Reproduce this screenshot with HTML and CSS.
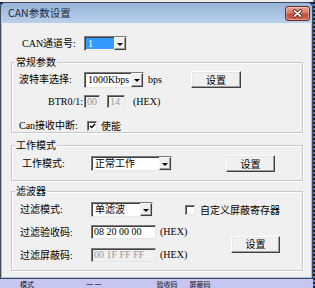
FILE: index.html
```html
<!DOCTYPE html>
<html>
<head>
<meta charset="utf-8">
<link rel="stylesheet" href="styles.css">
</head>
<body>
<div class="screen">
  <div class="bg-top"></div>
  <div class="window">
    <div class="titlebar">
      <span class="title">CAN参数设置</span>
      <div class="close">
        <svg width="11" height="9" viewBox="0 0 11 9"><path d="M2.5 1.8 L8.5 7.2 M8.5 1.8 L2.5 7.2" stroke="#5a1c16" stroke-width="3.4" stroke-linecap="round"/><path d="M2.5 1.8 L8.5 7.2 M8.5 1.8 L2.5 7.2" stroke="#ffffff" stroke-width="1.8" stroke-linecap="round"/></svg>
      </div>
    </div>
    <div class="client">
      <div class="row row-channel">
        <span class="lbl lbl-channel">CAN通道号:</span>
        <div class="combo combo-channel"><span class="combo-text"><span class="sel">1</span></span><span class="drop"></span></div>
      </div>

      <div class="group group-general">
        <div class="legend">常规参数</div>
        <div class="row row-baud">
          <span class="lbl lbl-baud">波特率选择:</span>
          <div class="combo combo-baud"><span class="combo-text">1000Kbps</span><span class="drop"></span></div>
          <span class="unit">bps</span>
          <div class="btn btn-baud">设置</div>
        </div>
        <div class="row row-btr">
          <span class="lbl lbl-btr">BTR0/1:</span>
          <div class="input disabled input-btr0">00</div>
          <div class="input disabled input-btr1">14</div>
          <span class="hex hex-btr">(HEX)</span>
        </div>
        <div class="row row-intr">
          <span class="lbl lbl-intr">Can接收中断:</span>
          <div class="check checked"><svg width="8" height="8" viewBox="0 0 8 8"><path d="M1.2 3.6 L3.1 5.6 L6.9 1.6" fill="none" stroke="#000" stroke-width="1.6"/></svg></div>
          <span class="check-label">使能</span>
        </div>
      </div>

      <div class="group group-mode">
        <div class="legend">工作模式</div>
        <div class="row row-mode">
          <span class="lbl lbl-mode">工作模式:</span>
          <div class="combo combo-mode"><span class="combo-text">正常工作</span><span class="drop"></span></div>
          <div class="btn btn-mode">设置</div>
        </div>
      </div>

      <div class="group group-filter">
        <div class="legend">滤波器</div>
        <div class="row row-fmode">
          <span class="lbl lbl-filter">过滤模式:</span>
          <div class="combo combo-filter"><span class="combo-text">单滤波</span><span class="drop"></span></div>
          <div class="check check-custom"></div>
          <span class="check-label">自定义屏蔽寄存器</span>
        </div>
        <div class="filter-block">
          <div class="filter-cols">
            <div class="row row-code">
              <span class="lbl lbl-filter">过滤验收码:</span>
              <div class="input input-code">08 20 00 00</div>
              <span class="hex">(HEX)</span>
            </div>
            <div class="row row-mask">
              <span class="lbl lbl-filter">过滤屏蔽码:</span>
              <div class="input disabled input-code">00 1F FF FF</div>
              <span class="hex">(HEX)</span>
            </div>
          </div>
          <div class="btn btn-filter">设置</div>
        </div>
      </div>
    </div>
  </div>
  <div class="bg-bottom">
    <span class="frag frag-1">模式</span>
    <span class="frag frag-2">一 一</span>
    <span class="frag frag-3">验收码</span>
    <span class="frag frag-4">屏蔽码</span>
  </div>
</div>
</body>
</html>
```

FILE: styles.css
```css
* { box-sizing: border-box; }
html, body { margin: 0; padding: 0; }
body {
  width: 315px;
  height: 288px;
  overflow: hidden;
  font-family: "Liberation Serif", "Noto Sans CJK SC", serif;
  font-size: 10px;
  color: #000;
}
.screen {
  width: 315px;
  height: 288px;
  overflow: hidden;
  display: flex;
  flex-direction: column;
  background: repeating-linear-gradient(to bottom, #4f7fc4 0 2px, #14233c 2px 4px);
}
.bg-top {
  height: 2px;
  width: 313px;
  background: #eceef0;
}
.window {
  width: 313px;
  height: 277px;
  border: 1px solid #3e4b5e;
  border-radius: 5px 5px 0 0;
  background: linear-gradient(#98b4d9, #b9d0eb 20px, #a9bdd6 21px, #a9bdd6);
  padding: 0 1px 1px 1px;
  display: flex;
  flex-direction: column;
}
.titlebar {
  height: 20px;
  display: flex;
  align-items: center;
  padding: 0 1px 0 6px;
}
.title {
  flex: 1;
  font-family: "Noto Sans CJK SC", "Noto Sans", sans-serif;
  font-size: 10.5px;
  color: #1c2c44;
  line-height: 12px;
}
.close {
  width: 25px;
  height: 15px;
  border: 1px solid #6e2a22;
  border-radius: 3px;
  background: linear-gradient(#e7a597, #d6786a 45%, #c24a3d 55%, #cf6757);
  display: flex;
  align-items: center;
  justify-content: center;
  box-shadow: inset 0 0 0 1px rgba(255,255,255,0.35);
}
.close svg { display: block; }
.client {
  height: 254px;
  background: #f0f0f0;
  display: flex;
  flex-direction: column;
}
.row {
  display: flex;
  align-items: center;
}
.lbl {
  flex: none;
  line-height: 13px;
  white-space: nowrap;
}

/* channel row */
.row-channel { margin-top: 13px; padding-left: 20px; height: 15px; }
.lbl-channel { width: 62px; }

/* combo */
.combo {
  flex: none;
  display: flex;
  background: #fff;
  border: 1px solid;
  border-color: #7a7a7a #e6e6e6 #e6e6e6 #7a7a7a;
  box-shadow: inset 1px 1px 0 #404040;
}
.combo-text {
  flex: 1;
  display: flex;
  align-items: center;
  padding-left: 3px;
  line-height: 12px;
  white-space: nowrap;
  overflow: hidden;
}
.combo-channel { width: 43px; height: 15px; }
.combo-channel .combo-text { padding: 1px 0 1px 1px; }
.sel {
  display: block;
  width: 28px;
  height: 11px;
  background: #3399ff;
  color: #fff;
  line-height: 11px;
  padding-left: 2px;
}
.drop {
  flex: none;
  width: 12px;
  background: #f0f0f0;
  border: 1px solid;
  border-color: #f8f8f8 #404040 #404040 #f8f8f8;
  box-shadow: inset -1px -1px 0 #a0a0a0;
  display: flex;
  align-items: center;
  justify-content: center;
}
.drop::after {
  content: "";
  border-left: 3px solid transparent;
  border-right: 3px solid transparent;
  border-top: 3px solid #000;
  margin-top: 1px;
}

/* group boxes */
.group {
  flex: none;
  margin-left: 9px;
  width: 292px;
  border: 1px solid #c8c8c8;
  box-shadow: 1px 1px 0 #fff, inset 1px 1px 0 #fff;
  display: flex;
  flex-direction: column;
}
.legend {
  width: max-content;
  height: 14px;
  line-height: 14px;
  margin: -8px 0 0 3px;
  padding: 0 1px;
  background: #f0f0f0;
  font-family: "Noto Sans CJK SC", sans-serif;
}
.group-general { margin-top: 11px; height: 71px; }
.group-mode { margin-top: 12px; height: 36px; }
.group-filter { margin-top: 10px; height: 80px; }

/* buttons */
.btn {
  flex: none;
  height: 17px;
  background: #f0f0f0;
  border: 1px solid;
  border-color: #ffffff #404040 #404040 #ffffff;
  box-shadow: inset -1px -1px 0 #a0a0a0, inset 1px 1px 0 #e6e6e6;
  display: flex;
  align-items: center;
  justify-content: center;
  font-family: "Noto Sans CJK SC", sans-serif;
  line-height: 12px;
}

/* general group */
.row-baud { margin-top: 2px; padding-left: 7px; height: 17px; }
.lbl-baud { width: 65px; }
.combo-baud { width: 60px; height: 16px; }
.unit { flex: none; width: 43px; margin-left: 4px; line-height: 12px; }
.btn-baud { width: 50px; }

.row-btr { margin-top: 7px; padding-left: 7px; height: 13px; }
.lbl-btr { width: 65px; text-align: right; padding-right: 1px; }
.input {
  flex: none;
  height: 13px;
  background: #fff;
  border: 1px solid;
  border-color: #7a7a7a #e6e6e6 #e6e6e6 #7a7a7a;
  box-shadow: inset 1px 1px 0 #404040;
  padding-left: 2px;
  line-height: 11px;
  white-space: nowrap;
}
.input.disabled { background: #f0f0f0; color: #9a9a9a; }
.input-btr0 { width: 16px; }
.input-btr1 { width: 18px; margin-left: 7px; }
.hex { flex: none; margin-left: 4px; line-height: 12px; white-space: nowrap; }
.hex-btr { margin-left: 8px; }

.row-intr { margin-top: 11px; padding-left: 7px; height: 13px; }
.lbl-intr { width: 68px; }
.check {
  flex: none;
  width: 10px;
  height: 10px;
  background: #fff;
  border: 1px solid;
  border-color: #7a7a7a #e6e6e6 #e6e6e6 #7a7a7a;
  box-shadow: inset 1px 1px 0 #404040;
  display: flex;
  align-items: center;
  justify-content: center;
}
.check svg { display: block; margin: 1px 0 0 1px; }
.check-label { flex: none; margin-left: 4px; line-height: 13px; white-space: nowrap; font-family: "Noto Sans CJK SC", sans-serif; }

/* mode group */
.row-mode { margin-top: 3px; padding-left: 10px; height: 17px; }
.lbl-mode { width: 69px; }
.combo-mode { width: 81px; height: 15px; }
.btn-mode { width: 49px; margin-left: 54px; }

/* filter group */
.row-fmode { margin-top: 4px; padding-left: 8px; height: 15px; }
.lbl-filter { width: 71px; }
.combo-filter { width: 62px; height: 15px; }
.check-custom { margin-left: 32px; }
.row-fmode .check-label { margin-left: 5px; }
.filter-block {
  display: flex;
  align-items: center;
  margin-top: 8px;
  padding-left: 8px;
}
.filter-cols {
  width: 180px;
  display: flex;
  flex-direction: column;
  gap: 9px;
}
.row-code, .row-mask { height: 14px; }
.input-code { width: 65px; height: 14px; line-height: 12px; }
.btn-filter { width: 49px; margin-left: 31px; margin-top: 1px; }

/* background window strip */
.bg-bottom {
  flex: 1;
  width: 313px;
  background: #c6c6f2;
  display: flex;
  align-items: center;
  overflow: hidden;
  font-family: "Noto Sans CJK SC", sans-serif;
  font-size: 7px;
  line-height: 8px;
  color: #111;
}
.frag { flex: none; white-space: nowrap; }
.frag-1 { margin-left: 20px; }
.frag-2 { margin-left: 52px; }
.frag-3 { margin-left: 55px; }
.frag-4 { margin-left: 12px; }
```
